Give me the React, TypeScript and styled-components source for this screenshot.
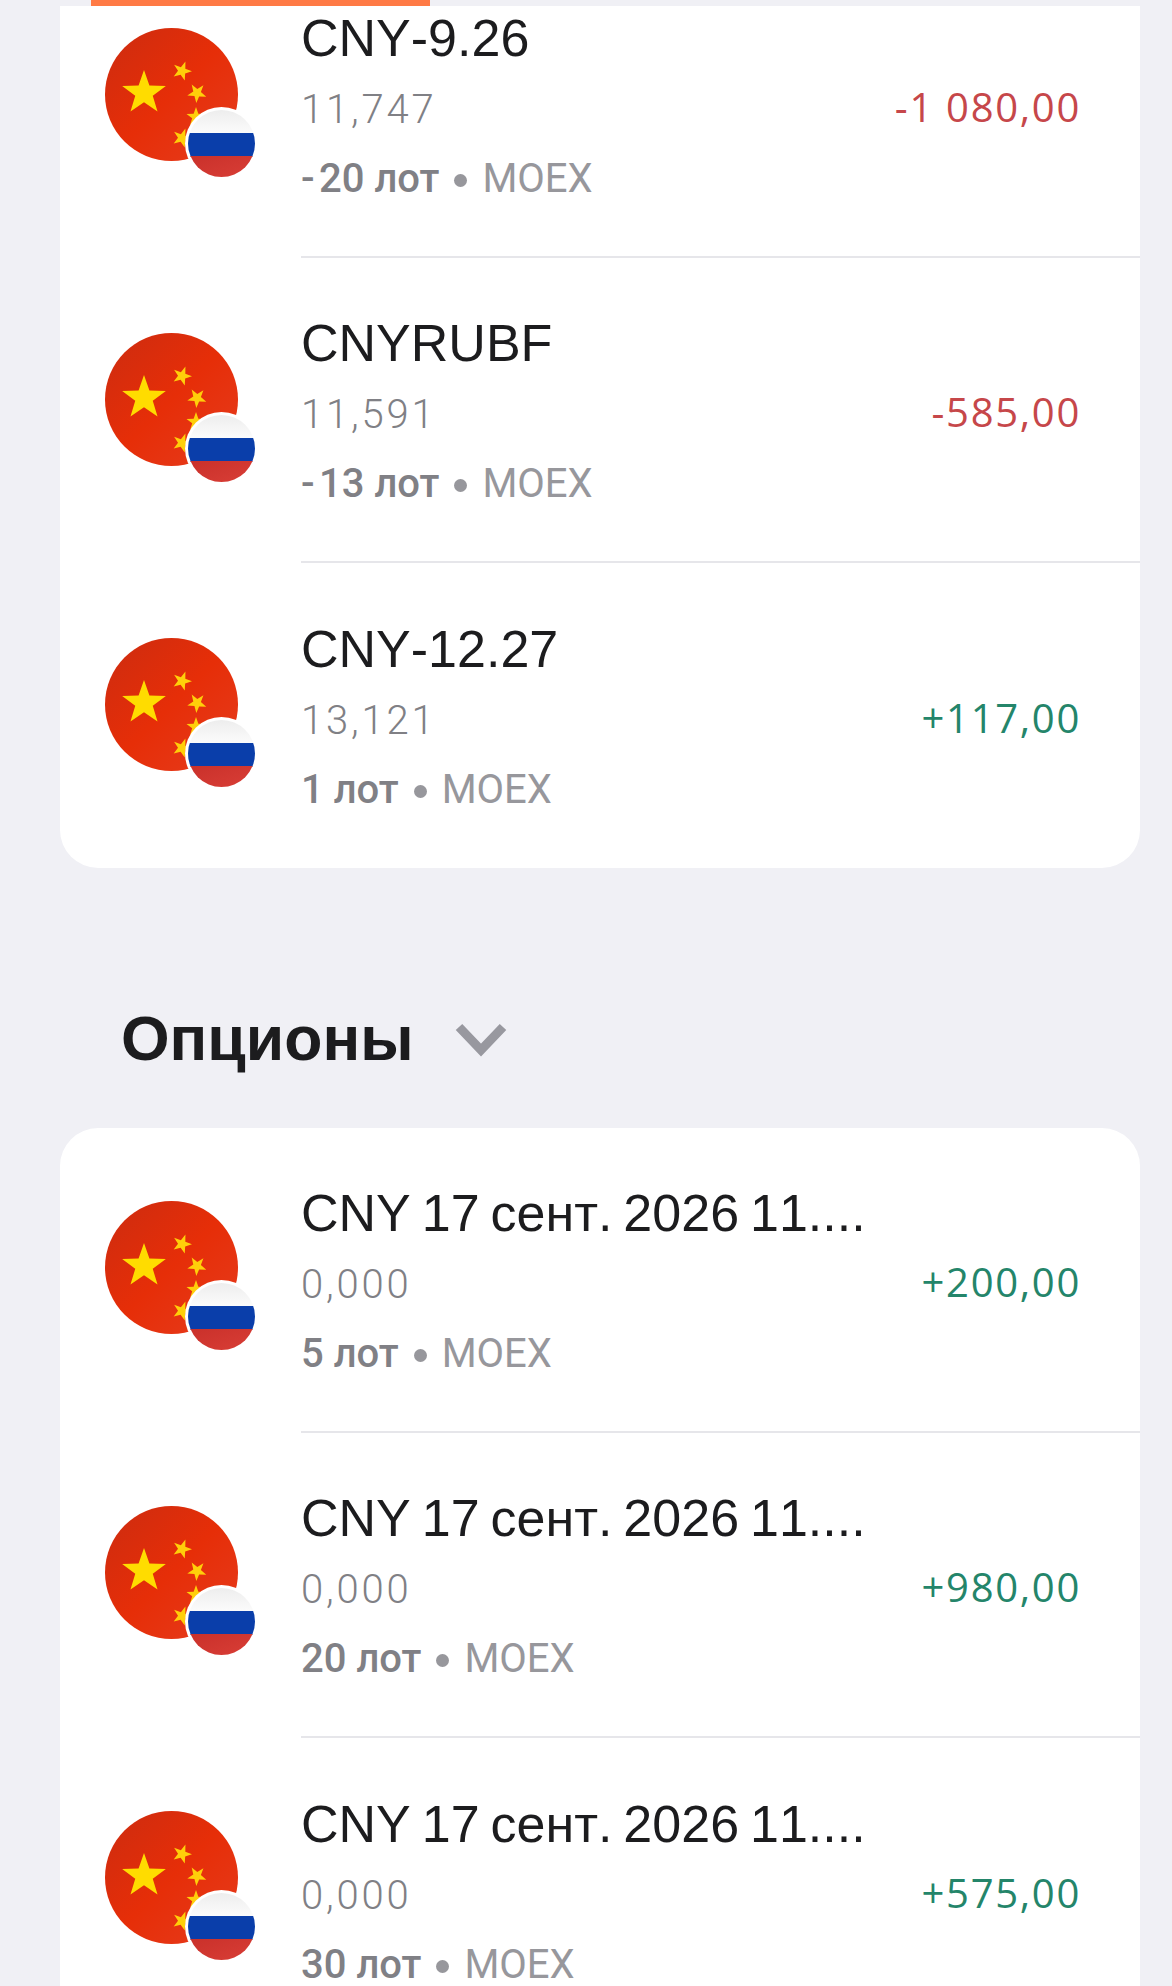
import { createGlobalStyle, styled } from "styled-components";

const GlobalStyle = createGlobalStyle`
  html, body {
    margin: 0;
    padding: 0;
    background: #f0f0f5;
  }
`;

const Page = styled.div`
  width: 1172px;
  height: 1986px;
  overflow: hidden;
  background: #f0f0f5;
  font-family: Roboto, "Liberation Sans", sans-serif;
`;

const TopBar = styled.div`
  height: 6px;
  padding-left: 91px;
`;

const TopBarProgress = styled.div`
  width: 339px;
  height: 6px;
  background: #ff7a45;
`;

const Viewport = styled.div`
  height: 1980px;
  overflow: hidden;
`;

// список проскроллен, первая строка обрезана сверху
const ScrollContent = styled.div`
  margin-top: -53px;
`;

const Card = styled.div`
  margin: 0 32px 0 60px;
  background: #fff;
  border-radius: 38px;
  overflow: hidden;
`;

const Row = styled.div`
  display: flex;
  height: 305px;
  box-sizing: border-box;
  padding-left: 45px;
`;

const IconBox = styled.div<{ $top: number }>`
  flex: none;
  width: 196px;
  padding-top: ${(p) => p.$top}px;
`;

const Body = styled.div`
  flex: 1;
  display: flex;
  align-items: center;
  padding-right: 59px;
  border-bottom: 2px solid #e6e6ea;

  ${Row}:last-child & {
    border-bottom: 0;
  }
`;

const Info = styled.div`
  flex: 1;
  min-width: 0;
`;

const Title = styled.div`
  font-family: "Liberation Sans", Arial, sans-serif;
  font-kerning: none;
  font-size: 52px;
  line-height: 60px;
  word-spacing: -3.5px;
  color: #1c1c1e;
  white-space: nowrap;
  margin-bottom: 18px;
`;

const Price = styled.div`
  font-weight: 300;
  font-size: 40px;
  line-height: 48px;
  letter-spacing: 2.8px;
  color: #808085;
  margin-bottom: 22px;
`;

const Meta = styled.div`
  font-size: 40px;
  line-height: 46px;
  color: #97979c;
  white-space: nowrap;
`;

const Lots = styled.span`
  font-weight: 500;
  color: #808085;
`;

const Minus = styled.span`
  display: inline-block;
  width: 18px;
`;

const Dot = styled.span`
  display: inline-block;
  width: 13px;
  height: 13px;
  margin: 0 15px;
  border-radius: 50%;
  background: #97979c;
  vertical-align: 5px;
`;

const Value = styled.div<{ $negative: boolean }>`
  font-family: "Open Sans", sans-serif;
  font-size: 40px;
  letter-spacing: 1.7px;
  white-space: nowrap;
  padding-top: 4px;
  color: ${(p) => (p.$negative ? "#c6474a" : "#24856a")};
`;

const SectionHeader = styled.div`
  display: flex;
  align-items: center;
  gap: 41px;
  height: 260px;
  padding: 80px 0 0 121px;
  box-sizing: border-box;
`;

const SectionTitle = styled.h2`
  margin: 0;
  font-family: "Liberation Sans", Arial, sans-serif;
  font-size: 62.5px;
  font-weight: 700;
  color: #1c1c1e;
`;

const ChevronIcon = styled.svg`
  margin-top: 3px;
`;

function star(cx: number, cy: number, r: number, rot: number) {
  const pts: string[] = [];
  for (let i = 0; i < 10; i++) {
    const rad = i % 2 === 0 ? r : r * 0.4;
    const a = ((rot + i * 36 - 90) * Math.PI) / 180;
    pts.push(`${(cx + rad * Math.cos(a)).toFixed(2)},${(cy + rad * Math.sin(a)).toFixed(2)}`);
  }
  return pts.join(" ");
}

function PairIcon({ id }: { id: string }) {
  return (
    <svg width="154" height="154" viewBox="0 0 154 154">
      <defs>
        <linearGradient id={`cn${id}`} x1="0" y1="0" x2="1" y2="1">
          <stop offset="0" stopColor="#cc2c10" />
          <stop offset="0.5" stopColor="#e62e08" />
          <stop offset="1" stopColor="#e63c1e" />
        </linearGradient>
        <linearGradient id={`w${id}`} x1="0" y1="0" x2="0" y2="1">
          <stop offset="0" stopColor="#ececec" />
          <stop offset="1" stopColor="#fcfcfc" />
        </linearGradient>
        <linearGradient id={`r${id}`} x1="0" y1="0" x2="1" y2="1">
          <stop offset="0" stopColor="#c9302a" />
          <stop offset="1" stopColor="#db4038" />
        </linearGradient>
        <clipPath id={`ru${id}`}>
          <circle cx="116.5" cy="115.5" r="33.5" />
        </clipPath>
      </defs>
      <circle cx="66.5" cy="66.5" r="66.5" fill={`url(#cn${id})`} />
      <polygon points={star(39, 65, 23, 0)} fill="#ffdc00" />
      <polygon points={star(77, 43, 10, 20)} fill="#ffcf0a" />
      <polygon points={star(92, 65, 10, 40)} fill="#ffcf0a" />
      <polygon points={star(91, 89, 10, 0)} fill="#ffcf0a" />
      <polygon points={star(77, 110, 10, 20)} fill="#ffcf0a" />
      <circle cx="116.5" cy="115.5" r="36.5" fill="#fff" />
      <g clipPath={`url(#ru${id})`}>
        <rect x="80" y="80" width="74" height="26" fill={`url(#w${id})`} />
        <rect x="80" y="105" width="74" height="24" fill="#0a3eaa" />
        <rect x="80" y="128" width="74" height="26" fill={`url(#r${id})`} />
      </g>
    </svg>
  );
}

function Chevron() {
  return (
    <ChevronIcon width="52" height="34" viewBox="0 0 52 34">
      <path d="M4 4 L26 27 L48 4" fill="none" stroke="#98989f" strokeWidth="9" />
    </ChevronIcon>
  );
}

interface Position {
  title: string;
  price: string;
  lots: string;
  value: string;
}

const futures: Position[] = [
  { title: "CNY-9.26", price: "11,747", lots: "-20 лот", value: "-1 080,00" },
  { title: "CNYRUBF", price: "11,591", lots: "-13 лот", value: "-585,00" },
  { title: "CNY-12.27", price: "13,121", lots: "1 лот", value: "+117,00" },
];

const optionName = "CNY 17 сент. 2026 11....";

const options: Position[] = [
  { title: optionName, price: "0,000", lots: "5 лот", value: "+200,00" },
  { title: optionName, price: "0,000", lots: "20 лот", value: "+980,00" },
  { title: optionName, price: "0,000", lots: "30 лот", value: "+575,00" },
];

function PositionRow({ item, id, iconTop }: { item: Position; id: string; iconTop: number }) {
  const short = item.lots.startsWith("-");
  return (
    <Row>
      <IconBox $top={iconTop}>
        <PairIcon id={id} />
      </IconBox>
      <Body>
        <Info>
          <Title>{item.title}</Title>
          <Price>{item.price}</Price>
          <Meta>
            <Lots>
              {short ? <Minus>-</Minus> : null}
              {short ? item.lots.slice(1) : item.lots}
            </Lots>
            <Dot />
            MOEX
          </Meta>
        </Info>
        <Value $negative={item.value.startsWith("-")}>{item.value}</Value>
      </Body>
    </Row>
  );
}

export default function App() {
  return (
    <Page>
      <GlobalStyle />
      <TopBar>
        <TopBarProgress />
      </TopBar>
      <Viewport>
        <ScrollContent>
          <Card>
            {futures.map((item, i) => (
              <PositionRow key={i} item={item} id={`f${i}`} iconTop={75} />
            ))}
          </Card>
          <SectionHeader>
            <SectionTitle>Опционы</SectionTitle>
            <Chevron />
          </SectionHeader>
          <Card>
            {options.map((item, i) => (
              <PositionRow key={i} item={item} id={`o${i}`} iconTop={73} />
            ))}
          </Card>
        </ScrollContent>
      </Viewport>
    </Page>
  );
}
